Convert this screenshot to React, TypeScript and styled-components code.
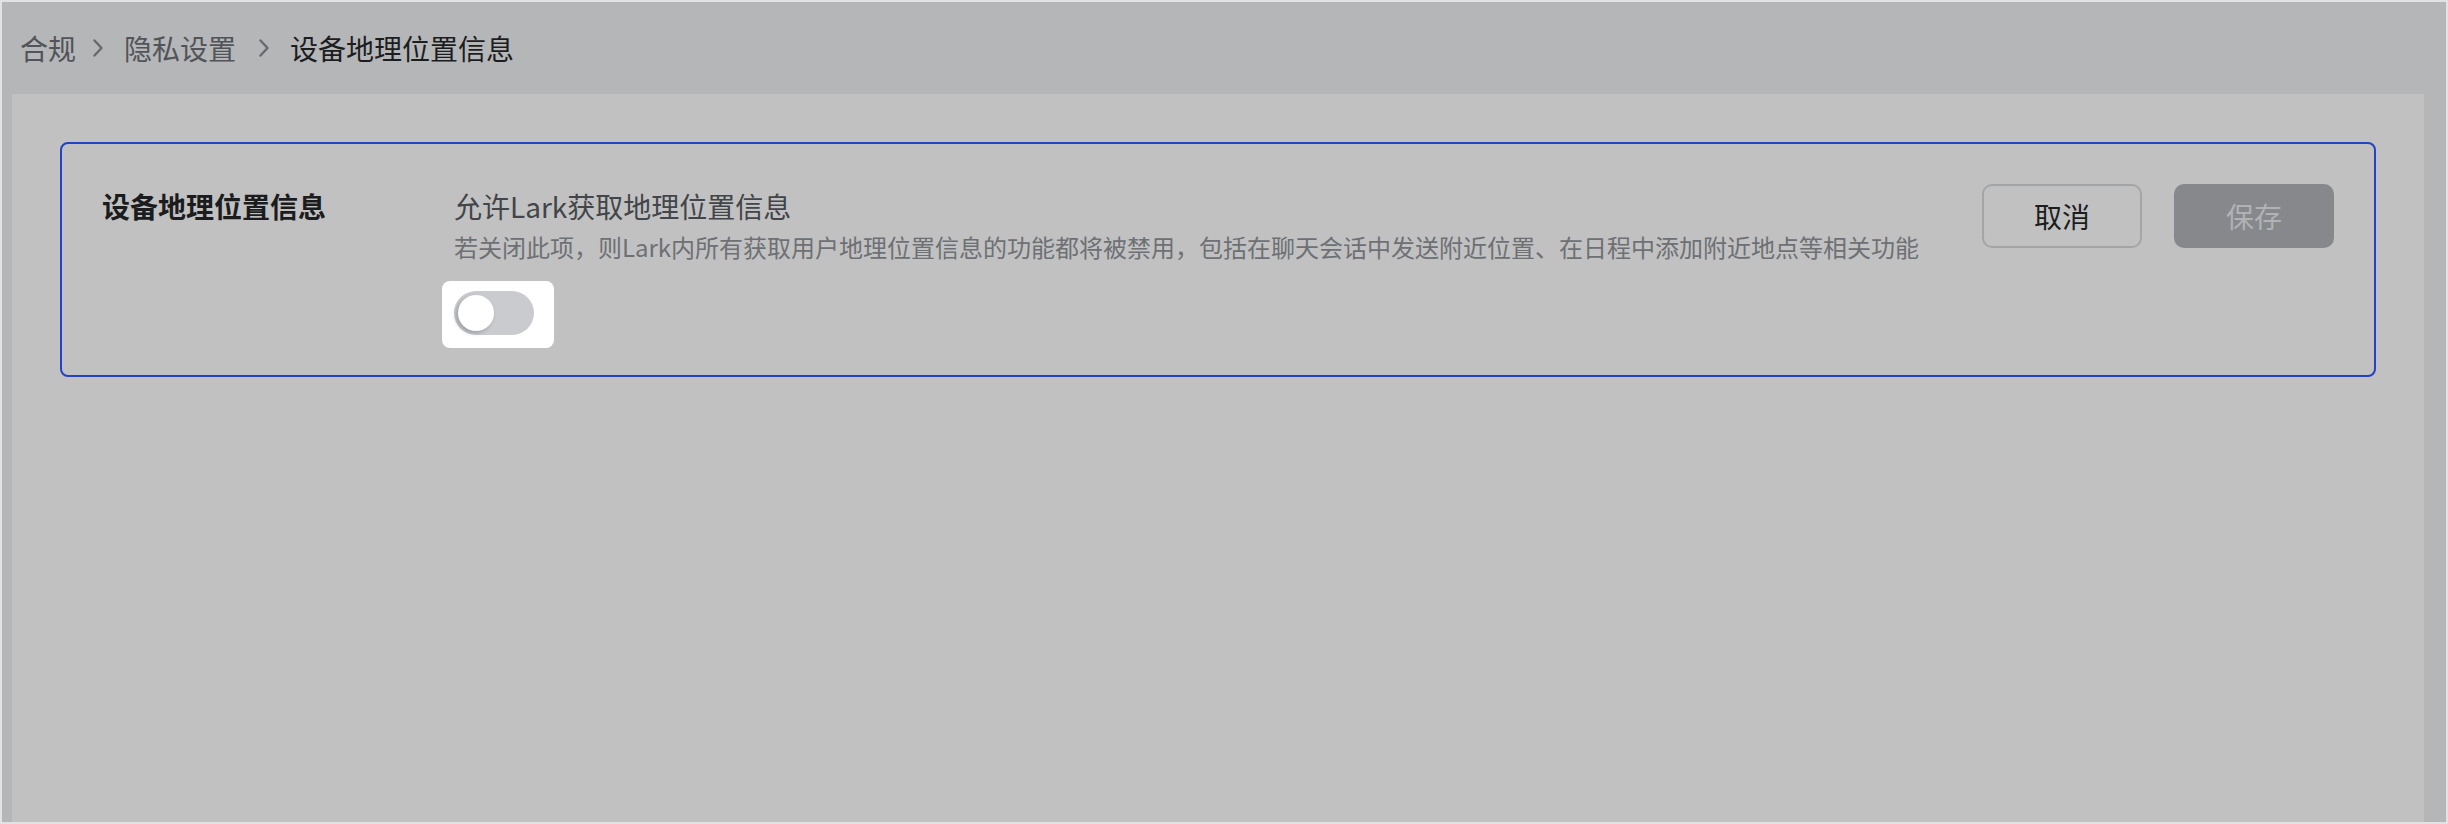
import { useState } from "react";
import styled, { createGlobalStyle } from "styled-components";

const GlobalStyle = createGlobalStyle`
  html, body {
    margin: 0;
    padding: 0;
    background: #e3e3e3;
  }
  body {
    font-family: "Noto Sans CJK SC", "Noto Sans", sans-serif;
  }
  * {
    box-sizing: border-box;
  }
`;

const Page = styled.div`
  width: 2448px;
  height: 824px;
  padding: 2px;
  background: #e3e3e3;
`;

const Frame = styled.div`
  height: 100%;
  display: flex;
  flex-direction: column;
  background: #b5b6b8;
`;

const Breadcrumb = styled.nav`
  height: 92px;
  flex-shrink: 0;
  display: flex;
  align-items: center;
  padding: 0 18px;
  font-size: 28px;
  line-height: 40px;
`;

const Crumb = styled.span<{ $current?: boolean; $trail?: number }>`
  color: ${(p) => (p.$current ? "#1c1d1f" : "#515458")};
  padding-right: ${(p) => p.$trail ?? 0}px;
  white-space: nowrap;
`;

const Sep = styled.svg`
  width: 24px;
  height: 24px;
  margin: 0 14px 0 10px;
  color: #66696d;
  flex-shrink: 0;
`;

const Panel = styled.main`
  flex: 1;
  margin: 0 22px 0 10px;
  padding: 48px;
  background: #c1c1c1;
`;

const Card = styled.section`
  display: flex;
  align-items: flex-start;
  padding: 40px;
  border: 2px solid #2342c6;
  border-radius: 8px;
`;

const Label = styled.div`
  width: 352px;
  flex-shrink: 0;
  font-size: 28px;
  line-height: 44px;
  font-weight: 600;
  color: #1b1c1e;
`;

const Body = styled.div`
  flex: 1;
  min-width: 0;
  display: flex;
  flex-direction: column;
  align-items: flex-start;
`;

const Title = styled.div`
  font-size: 28px;
  line-height: 44px;
  color: #424549;
`;

const Desc = styled.div`
  font-size: 24px;
  line-height: 38px;
  color: #6d7074;
`;

const Spotlight = styled.div`
  margin: 15px 0 -13px -12px;
  padding: 10px 20px 13px 12px;
  background: #ffffff;
  border-radius: 8px;
`;

const Track = styled.button<{ $on: boolean }>`
  position: relative;
  display: block;
  width: 80px;
  height: 44px;
  padding: 0;
  border: none;
  border-radius: 22px;
  background: ${(p) => (p.$on ? "#3370ff" : "#c9cbce")};
  cursor: pointer;
`;

const Knob = styled.span<{ $on: boolean }>`
  position: absolute;
  top: 4px;
  left: ${(p) => (p.$on ? "40px" : "4px")};
  width: 36px;
  height: 36px;
  border-radius: 50%;
  background: #ffffff;
  box-shadow: -2px 2px 4px rgba(70, 74, 80, 0.35);
`;

const Actions = styled.div`
  display: flex;
  gap: 32px;
  margin-left: 40px;
  flex-shrink: 0;
`;

const Button = styled.button<{ $primary?: boolean }>`
  width: 160px;
  height: 64px;
  border-radius: 10px;
  font-family: inherit;
  font-size: 28px;
  line-height: 40px;
  cursor: pointer;
  border: ${(p) => (p.$primary ? "none" : "2px solid #a4a5a7")};
  background: ${(p) => (p.$primary ? "#86888b" : "transparent")};
  color: ${(p) => (p.$primary ? "#b1b2b4" : "#1c1d1f")};
`;

function Chevron() {
  return (
    <Sep viewBox="0 0 24 24" fill="none">
      <path
        d="M8.5 4.5 L15.5 12 L8.5 19.5"
        stroke="currentColor"
        strokeWidth="2.4"
        strokeLinecap="round"
        strokeLinejoin="round"
      />
    </Sep>
  );
}

export default function App() {
  const [enabled, setEnabled] = useState(false);

  return (
    <Page>
      <GlobalStyle />
      <Frame>
        <Breadcrumb>
          <Crumb>合规</Crumb>
          <Chevron />
          <Crumb $trail={6}>隐私设置</Crumb>
          <Chevron />
          <Crumb $current>设备地理位置信息</Crumb>
        </Breadcrumb>
        <Panel>
          <Card>
            <Label>设备地理位置信息</Label>
            <Body>
              <Title>允许Lark获取地理位置信息</Title>
              <Desc>
                若关闭此项，则Lark内所有获取用户地理位置信息的功能都将被禁用，包括在聊天会话中发送附近位置、在日程中添加附近地点等相关功能
              </Desc>
              <Spotlight>
                <Track
                  role="switch"
                  aria-checked={enabled}
                  $on={enabled}
                  onClick={() => setEnabled(!enabled)}
                >
                  <Knob $on={enabled} />
                </Track>
              </Spotlight>
            </Body>
            <Actions>
              <Button>取消</Button>
              <Button $primary disabled>
                保存
              </Button>
            </Actions>
          </Card>
        </Panel>
      </Frame>
    </Page>
  );
}
